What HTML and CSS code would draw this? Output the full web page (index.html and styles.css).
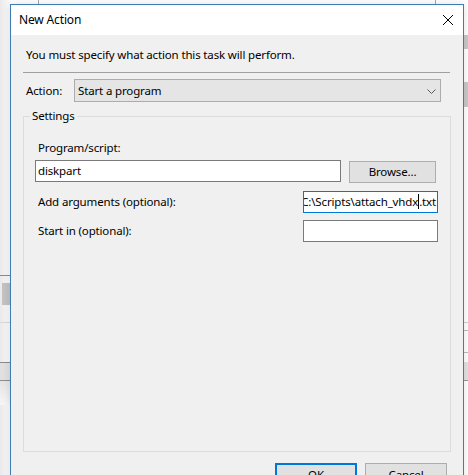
FILE: index.html
```html
<!DOCTYPE html>
<html lang="en">
<head>
<meta charset="utf-8">
<title>New Action</title>
<link rel="stylesheet" href="styles.css">
</head>
<body>
<div class="dialog" role="dialog" aria-label="New Action">
  <div class="titlebar">
    <span class="title">New Action</span>
    <span class="close" aria-label="Close">
      <svg width="10" height="10" viewBox="0 0 10 10"><path d="M0 0 L10 10 M10 0 L0 10" stroke="#000" stroke-width="1" fill="none"/></svg>
    </span>
  </div>
  <div class="content">
    <p class="intro">You must specify what action this task will perform.</p>
    <hr class="sep">
    <div class="action-row">
      <span class="action-label">Action:</span>
      <div class="combo">
        <span class="combo-text">Start a program</span>
        <svg class="chev" width="9" height="5" viewBox="0 0 9 5"><path d="M0.5 0.5 L4.5 4.5 L8.5 0.5" stroke="#5a5a5a" stroke-width="1" fill="none"/></svg>
      </div>
    </div>
    <fieldset class="settings">
      <legend>Settings</legend>
      <div class="fields">
        <div class="field-label">Program/script:</div>
        <div class="prog-row">
          <div class="textbox prog">diskpart</div>
          <div class="btn browse">Browse...</div>
        </div>
        <div class="arg-row first">
          <span class="field-label">Add arguments (optional):</span>
          <div class="textbox focused"><span class="scroll">/s C:\Scripts\attach_vhdx<span class="caret"></span>.txt</span></div>
        </div>
        <div class="arg-row second">
          <span class="field-label">Start in (optional):</span>
          <div class="textbox"></div>
        </div>
      </div>
    </fieldset>
    <div class="buttons">
      <div class="btn ok">OK</div>
      <div class="btn cancel">Cancel</div>
    </div>
  </div>
</div>
</body>
</html>
```
FILE: styles.css
```css
* { box-sizing: border-box; }
html, body { margin: 0; padding: 0; }
body {
  width: 468px;
  height: 475px;
  overflow: hidden;
  position: relative;
  font-family: "Noto Sans", "Segoe UI", sans-serif;
  font-size: 11.5px;
  letter-spacing: -0.15px;
  color: #000;
  background:
    linear-gradient(#8c8c8c, #8c8c8c) 0 275px / 11px 1px no-repeat,
    linear-gradient(#c2c2c2, #c2c2c2) 2px 283px / 9px 22px no-repeat,
    linear-gradient(#d8d8d8, #d8d8d8) 0 322px / 11px 1px no-repeat,
    linear-gradient(#8c8c8c, #8c8c8c) 0 362px / 11px 1px no-repeat,
    linear-gradient(#8c8c8c, #8c8c8c) 0 380px / 11px 1px no-repeat,
    linear-gradient(#e0e0e0, #e0e0e0) 0 363px / 11px 17px no-repeat,
    linear-gradient(#e4e4e4, #f6f6f6) 0 381px / 11px 24px no-repeat,
    linear-gradient(#a8a8a8, #a8a8a8) 38px 0 / 1px 5px no-repeat,
    linear-gradient(#a8a8a8, #a8a8a8) 435px 0 / 1px 5px no-repeat,
    linear-gradient(#c8c8c8, #c8c8c8) 464px 35px / 4px 14px no-repeat,
    linear-gradient(#c8c8c8, #c8c8c8) 464px 82px / 4px 25px no-repeat,
    linear-gradient(#d0d0d0, #d0d0d0) 464px 322px / 4px 1px no-repeat,
    linear-gradient(#bcbcbc, #bcbcbc) 464px 330px / 4px 1px no-repeat,
    linear-gradient(#bcbcbc, #bcbcbc) 464px 352px / 4px 1px no-repeat,
    linear-gradient(#999, #999) 464px 380px / 4px 1px no-repeat,
    linear-gradient(#e2e2e2, #e2e2e2) 464px 362px / 4px 18px no-repeat,
    linear-gradient(to right, #e9e9e9, #fbfbfb 10px) 0 0 / 11px 475px no-repeat,
    #fff;
}

.dialog {
  position: absolute;
  left: 10px;
  top: 4px;
  width: 454px;
  height: 495px;
  border: 1px solid #3d7db3;
  background: #f0f0f0;
  display: flex;
  flex-direction: column;
  box-shadow: 0 0 8px rgba(0,0,0,0.12);
}

.titlebar {
  height: 30px;
  background: #fff;
  display: flex;
  align-items: center;
  justify-content: space-between;
  padding-left: 8px;
  flex: none;
}
.title { line-height: 16px; font-size: 12px; }
.close {
  width: 30px;
  height: 30px;
  display: flex;
  align-items: center;
  justify-content: center;
}
.close svg { display: block; }

.content {
  flex: 1;
  display: flex;
  flex-direction: column;
  padding: 12px 12px 12px 12px;
}

.intro {
  margin: 0 0 0 3px;
  line-height: 16px;
}

.sep {
  margin: 9px 1px 0 0;
  border: 0;
  height: 1px;
  background: #a0a0a0;
}

.action-row {
  margin-top: 6px;
  display: flex;
  align-items: center;
  height: 23px;
  padding-left: 3px;
}
.action-label {
  width: 48px;
  line-height: 16px;
}
.combo {
  width: 367px;
  height: 23px;
  background: #e5e5e5;
  border: 1px solid #acacac;
  display: flex;
  align-items: center;
  justify-content: space-between;
  padding: 0 4px 0 3px;
}
.combo-text { line-height: 16px; }
.chev { display: block; margin-top: 1px; }

.settings {
  margin: 6px 0 0 0;
  flex: 1;
  border: 1px solid #dcdcdc;
  padding: 16px 12px 0 6px;
  min-width: 0;
}
.settings legend {
  padding: 0 2px;
  line-height: 16px;
}

.fields { padding-left: 5px; }
.field-label { line-height: 16px; padding-left: 3px; }

.prog-row {
  margin-top: 4px;
  display: flex;
  gap: 8px;
}
.textbox {
  height: 22px;
  background: #fff;
  border: 1px solid #7a7a7a;
  line-height: 20px;
  padding: 0 2px;
  white-space: nowrap;
  overflow: hidden;
}
.textbox.prog { width: 306px; }
.textbox.focused {
  border-color: #0078d7;
  display: flex;
  justify-content: flex-end;
  padding: 0 1px 0 2px;
}
.scroll { flex: none; white-space: nowrap; }
.caret {
  display: inline-block;
  width: 1px;
  height: 15px;
  background: #000;
  vertical-align: -3px;
}

.btn {
  height: 23px;
  background: #e1e1e1;
  border: 1px solid #adadad;
  display: flex;
  align-items: center;
  justify-content: center;
  line-height: 16px;
}
.browse { width: 87px; height: 22px; margin-top: 1px; }

.arg-row {
  display: grid;
  grid-template-columns: 1fr 135px;
  align-items: center;
}
.arg-row.first { margin-top: 8px; }
.arg-row.second { margin-top: 7px; }

.buttons {
  margin-top: 11px;
  display: flex;
  justify-content: flex-end;
  gap: 8px;
  padding-right: 4px;
  flex: none;
}
.buttons .btn { width: 82px; }
.btn.ok { border: 2px solid #0078d7; }
```
